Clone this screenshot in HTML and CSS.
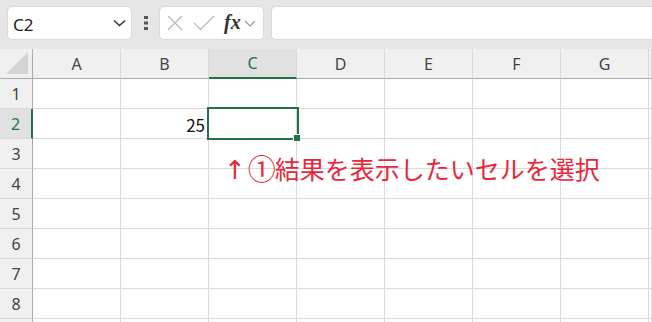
FILE: index.html
```html
<!DOCTYPE html>
<html lang="ja">
<head>
    <meta charset="UTF-8">
    <meta name="viewport" content="width=device-width, initial-scale=1.0">
    <title>Excel - セルを選択</title>
    <link rel="stylesheet" href="styles.css">
</head>
<body>
    <div class="toolbar">
        <div class="namebox">
            <span class="cellref">C2</span>
            <svg class="chevron" width="13" height="8" viewBox="0 0 13 8"><polyline points="1,1.5 6.5,6.5 12,1.5" /></svg>
        </div>
        <div class="grip">
            <svg width="4" height="14" viewBox="0 0 4 14"><rect x="0" y="0" width="4" height="3" /><rect x="0" y="5.5" width="4" height="3" /><rect x="0" y="11" width="4" height="3" /></svg>
        </div>
        <div class="fxbox">
            <svg class="icon-cancel" width="16" height="16" viewBox="0 0 16 16"><line x1="1" y1="1" x2="15" y2="15" /><line x1="15" y1="1" x2="1" y2="15" /></svg>
            <svg class="icon-enter" width="22" height="16" viewBox="0 0 22 16"><polyline points="1,8 7.5,14.5 21,1" /></svg>
            <span class="fx">fx</span>
            <svg class="chevron small" width="12" height="7" viewBox="0 0 12 7"><polyline points="1,1 6,6 11,1" /></svg>
        </div>
        <div class="formula"></div>
    </div>

    <div class="sheet">
        <div class="corner"><svg width="22" height="22" viewBox="0 0 22 22"><polygon points="0,22 22,0 22,22" /></svg></div>
        <div class="colhead">A</div>
        <div class="colhead">B</div>
        <div class="colhead active">C</div>
        <div class="colhead">D</div>
        <div class="colhead">E</div>
        <div class="colhead">F</div>
        <div class="colhead">G</div>
        <div class="colhead"></div>

        <div class="rowhead">1</div>
        <div class="cell"></div><div class="cell"></div><div class="cell"></div><div class="cell"></div><div class="cell"></div><div class="cell"></div><div class="cell"></div><div class="cell"></div>

        <div class="rowhead active">2</div>
        <div class="cell"></div>
        <div class="cell number">25</div>
        <div class="cell selected"><div class="selection"><span class="handle"></span></div></div>
        <div class="cell"></div><div class="cell"></div><div class="cell"></div><div class="cell"></div><div class="cell"></div>

        <div class="rowhead">3</div>
        <div class="cell"></div><div class="cell"></div><div class="cell"></div><div class="cell"></div><div class="cell"></div><div class="cell"></div><div class="cell"></div><div class="cell"></div>

        <div class="rowhead">4</div>
        <div class="cell"></div><div class="cell"></div><div class="cell"></div><div class="cell"></div><div class="cell"></div><div class="cell"></div><div class="cell"></div><div class="cell"></div>

        <div class="rowhead">5</div>
        <div class="cell"></div><div class="cell"></div><div class="cell"></div><div class="cell"></div><div class="cell"></div><div class="cell"></div><div class="cell"></div><div class="cell"></div>

        <div class="rowhead">6</div>
        <div class="cell"></div><div class="cell"></div><div class="cell"></div><div class="cell"></div><div class="cell"></div><div class="cell"></div><div class="cell"></div><div class="cell"></div>

        <div class="rowhead">7</div>
        <div class="cell"></div><div class="cell"></div><div class="cell"></div><div class="cell"></div><div class="cell"></div><div class="cell"></div><div class="cell"></div><div class="cell"></div>

        <div class="rowhead">8</div>
        <div class="cell"></div><div class="cell"></div><div class="cell"></div><div class="cell"></div><div class="cell"></div><div class="cell"></div><div class="cell"></div><div class="cell"></div>

        <div class="rowhead"></div>
        <div class="cell"></div><div class="cell"></div><div class="cell"></div><div class="cell"></div><div class="cell"></div><div class="cell"></div><div class="cell"></div><div class="cell"></div>

        <!-- 注釈 -->
        <div class="note"><span class="arrow">↑</span><span class="circled">①</span>結果を表示したいセルを選択</div>
    </div>
</body>
</html>
```

FILE: styles.css
```css
html, body {
    margin: 0;
    width: 652px;
    height: 322px;
    overflow: hidden;
    background: #fff;
}

body {
    font-family: 'Noto Sans', 'Noto Sans CJK JP', sans-serif;
    color: #333;
}

/* 数式バー */
.toolbar {
    height: 49px;
    box-sizing: border-box;
    background: #e6e6e6;
    padding: 6px 0 0 7px;
    display: flex;
    align-items: flex-start;
}

.namebox,
.fxbox,
.formula {
    height: 34px;
    box-sizing: border-box;
    background: #fff;
    border: 1px solid #dadada;
    border-radius: 5px;
}

.namebox {
    width: 125px;
    display: flex;
    align-items: center;
    justify-content: space-between;
    padding: 0 5px 0 5px;
}

.cellref {
    font-size: 17px;
    color: #222;
    position: relative;
    top: 1px;
}

.chevron polyline {
    fill: none;
    stroke: #333;
    stroke-width: 1.5;
}

.chevron.small polyline {
    stroke: #999;
    stroke-width: 1.2;
}

.grip {
    width: 27px;
    height: 34px;
    display: flex;
    align-items: center;
    justify-content: center;
}

.grip rect {
    fill: #555;
}

.fxbox {
    width: 105px;
    display: flex;
    align-items: center;
    padding-left: 7px;
}

.icon-cancel line,
.icon-enter polyline {
    fill: none;
    stroke: #bdbdbd;
    stroke-width: 1.4;
}

.icon-cancel {
    margin-right: 10px;
}

.icon-enter {
    margin-right: 9px;
}

.fx {
    font-family: 'Liberation Serif', serif;
    font-style: italic;
    font-weight: bold;
    font-size: 20px;
    color: #333;
    margin-right: 3px;
    position: relative;
    top: -1px;
}

.formula {
    margin-left: 7px;
    flex: 1;
    border-right: none;
    border-radius: 5px 0 0 5px;
}

/* シート */
.sheet {
    position: relative;
    display: grid;
    grid-template-columns: 33px repeat(7, 88px) 3px;
    grid-template-rows: repeat(9, 30px) 4px;
    overflow: hidden;
}

.corner,
.colhead,
.rowhead,
.cell {
    box-sizing: border-box;
}

.corner {
    background: #f0f0f0;
    border-right: 1px solid #ababab;
    border-bottom: 1px solid #ababab;
    display: flex;
    align-items: flex-end;
    justify-content: flex-end;
    padding: 0 4px 4px 0;
}

.corner polygon {
    fill: #d4d4d4;
}

.colhead {
    background: #f0f0f0;
    border-right: 1px solid #d8d8d8;
    border-bottom: 1px solid #ababab;
    display: flex;
    align-items: center;
    justify-content: center;
    font-size: 16px;
    color: #444;
}

.colhead.active {
    background: #e1e1e1;
    border-bottom: 2px solid #217346;
    color: #217346;
}

.rowhead {
    background: #f0f0f0;
    border-right: 1px solid #ababab;
    border-bottom: 1px solid #d8d8d8;
    display: flex;
    align-items: center;
    justify-content: center;
    font-size: 16px;
    color: #444;
    padding-top: 1px;
}

.rowhead.active {
    background: #e1e1e1;
    border-right: 2px solid #217346;
    color: #217346;
}

.cell {
    border-right: 1px solid #dadada;
    border-bottom: 1px solid #dadada;
}

.cell.number {
    display: flex;
    align-items: center;
    justify-content: flex-end;
    padding: 2px 3px 0 0;
    font-family: 'Noto Sans CJK JP', sans-serif;
    font-size: 17px;
    color: #111;
}

.cell.selected {
    position: relative;
}

.selection {
    position: absolute;
    left: -2px;
    top: -2px;
    width: 92px;
    height: 33px;
    box-sizing: border-box;
    border: 2px solid #217346;
}

.handle {
    position: absolute;
    right: -3px;
    bottom: -3px;
    width: 6px;
    height: 6px;
    background: #217346;
    border-left: 1px solid #fff;
    border-top: 1px solid #fff;
}

.note {
    position: absolute;
    left: 224px;
    top: 101px;
    font-family: 'Noto Sans CJK JP', sans-serif;
    font-size: 25px;
    line-height: 36px;
    color: #e8283a;
    white-space: nowrap;
}

.arrow {
    font-family: 'DejaVu Sans', sans-serif;
    font-size: 26px;
    margin-right: 2px;
}

.circled {
    font-size: 28px;
    vertical-align: -1px;
    margin-right: -1px;
}
```
